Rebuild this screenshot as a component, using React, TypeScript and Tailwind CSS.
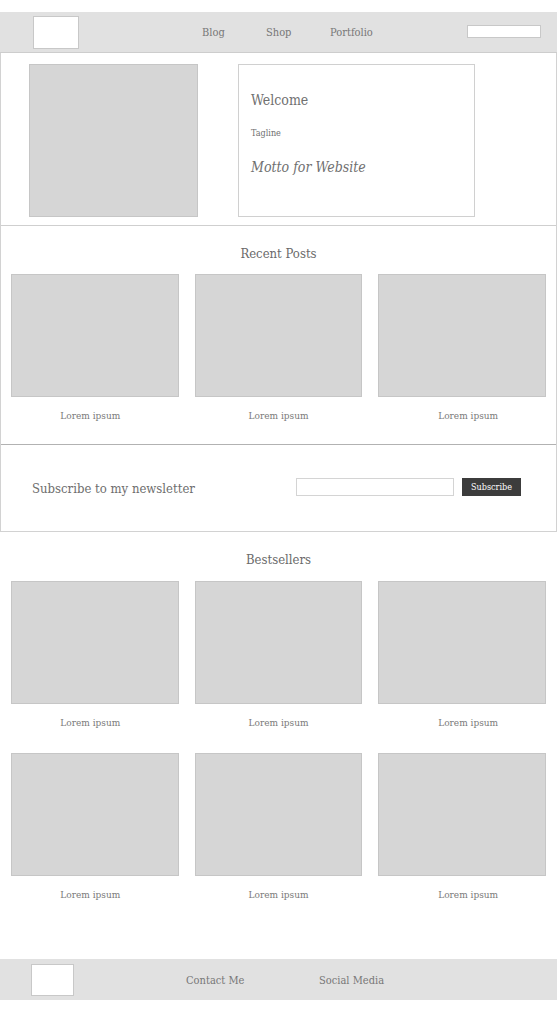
const font = {
  fontFamily: '"DejaVu Serif Condensed", "DejaVu Serif", "Liberation Serif", serif',
};

// labels in the mock sit on a slightly wider pitch than the cards
const labelShift = ["pr-[9px]", "", "pl-[12px]"];

function Card({ label, col }: { label: string; col: number }) {
  return (
    <div className="flex flex-col">
      <div className="h-[123px] bg-[#d6d6d6] border border-[#c6c6c6]" />
      <p
        className={`mt-[11px] text-center text-[10px] leading-[16px] text-[#7a7a7a] ${labelShift[col]}`}
      >
        {label}
      </p>
    </div>
  );
}

export default function App() {
  const posts = ["Lorem ipsum", "Lorem ipsum", "Lorem ipsum"];

  return (
    <div className="min-h-screen bg-white pt-[12px]" style={font}>
      <header className="h-[41px] bg-[#e1e1e1] border-b border-[#cdcdcd] flex items-center">
        <div className="ml-[33px] w-[46px] h-[33px] bg-white border border-[#c8c8c8]" />
        <nav className="ml-[123px] mt-[2px] flex text-[11px] text-[#777]">
          <a className="w-[64px]">Blog</a>
          <a className="w-[64px]">Shop</a>
          <a className="w-[64px]">Portfolio</a>
        </nav>
        <input
          className="ml-auto mr-[16px] mb-[2px] w-[74px] h-[13px] bg-white border border-[#c8c8c8] outline-none"
          aria-label="search"
        />
      </header>

      <div className="border-x border-b border-[#d2d2d2]">
        <section className="h-[173px] flex pl-[28px] pt-[11px] border-b border-[#cfcfcf]">
          <div className="w-[169px] h-[153px] bg-[#d6d6d6] border border-[#c6c6c6]" />
          <div className="ml-[40px] w-[237px] h-[153px] border border-[#d0d0d0] pl-[12px] pt-[26px] text-[#707070]">
            <h1 className="text-[14px] leading-[18px]">Welcome</h1>
            <p className="mt-[18px] text-[9px] leading-[12px]">Tagline</p>
            <p className="mt-[19px] text-[14px] leading-[18px] italic">Motto for Website</p>
          </div>
        </section>

        <section className="px-[10px] pt-[20px] pb-[20px] border-b border-[#b2b2b2]">
          <h2 className="text-center text-[13px] leading-[16px] text-[#6a6a6a]">Recent Posts</h2>
          <div className="mt-[12px] grid grid-cols-3 gap-[16px]">
            {posts.map((p, i) => (
              <Card key={i} label={p} col={i} />
            ))}
          </div>
        </section>

        <section className="h-[86px] flex items-start pt-[33px]">
          <p className="mt-[3px] pl-[31px] w-[295px] text-[13px] leading-[16px] text-[#6e6e6e]">
            Subscribe to my newsletter
          </p>
          <input
            className="w-[158px] h-[18px] bg-white border border-[#d4d4d4] outline-none"
            aria-label="email"
          />
          <button className="ml-[8px] w-[59px] h-[18px] bg-[#3c3c3c] text-white text-[9px] leading-[18px]">
            Subscribe
          </button>
        </section>
      </div>

      <section className="px-[11px] pt-[20px]">
        <h2 className="text-center text-[13px] leading-[16px] text-[#6a6a6a]">Bestsellers</h2>
        <div className="mt-[13px] grid grid-cols-3 gap-x-[16px] gap-y-[22px]">
          {[...posts, ...posts].map((p, i) => (
            <Card key={i} label={p} col={i % 3} />
          ))}
        </div>
      </section>

      <footer className="mt-[56px] h-[41px] bg-[#e1e1e1] flex items-center text-[11px] text-[#777]">
        <div className="ml-[31px] w-[43px] h-[32px] bg-white border border-[#c8c8c8]" />
        <a className="ml-[112px] mt-[3px] w-[133px]">Contact Me</a>
        <a className="mt-[3px]">Social Media</a>
      </footer>
    </div>
  );
}
